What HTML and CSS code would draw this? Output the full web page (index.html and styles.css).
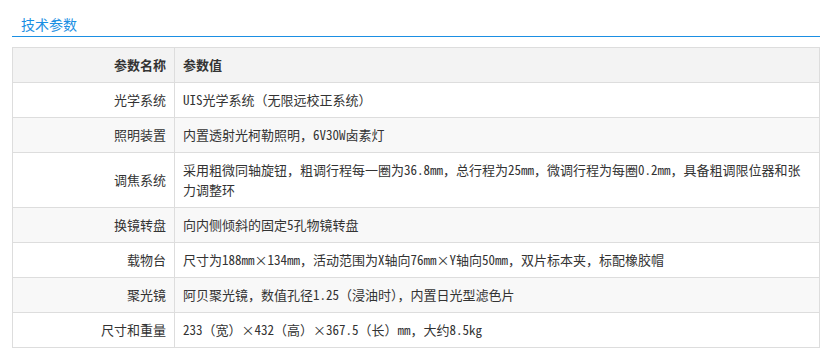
FILE: index.html
```html
<!DOCTYPE html>
<html lang="zh-CN">
<head>
<meta charset="utf-8">
<title>技术参数</title>
<link rel="stylesheet" href="styles.css">
</head>
<body>
<div class="panel">
  <div class="panel-head"><h2 class="panel-title">技术参数</h2></div>
  <table class="spec">
    <thead>
      <tr><th class="k">参数名称</th><th class="v">参数值</th></tr>
    </thead>
    <tbody>
      <tr><td class="k">光学系统</td><td class="v"><span class="en">UIS</span>光学系统（无限远校正系统）</td></tr>
      <tr><td class="k">照明装置</td><td class="v">内置透射光柯勒照明，<span class="en">6V30W</span>卤素灯</td></tr>
      <tr><td class="k">调焦系统</td><td class="v">采用粗微同轴旋钮，粗调行程每一圈为<span class="en">36.8mm</span>，总行程为<span class="en">25mm</span>，微调行程为每圈<span class="en">0.2mm</span>，具备粗调限位器和张力调整环</td></tr>
      <tr><td class="k">换镜转盘</td><td class="v">向内侧倾斜的固定<span class="en">5</span>孔物镜转盘</td></tr>
      <tr><td class="k">载物台</td><td class="v">尺寸为<span class="en">188mm</span>×<span class="en">134mm</span>，活动范围为<span class="en">X</span>轴向<span class="en">76mm</span>×<span class="en">Y</span>轴向<span class="en">50mm</span>，双片标本夹，标配橡胶帽</td></tr>
      <tr><td class="k">聚光镜</td><td class="v">阿贝聚光镜，数值孔径<span class="en">1.25</span>（浸油时），内置日光型滤色片</td></tr>
      <tr><td class="k">尺寸和重量</td><td class="v"><span class="en">233</span>（宽）×<span class="en">432</span>（高）×<span class="en">367.5</span>（长）<span class="en">mm</span>，大约<span class="en">8.5kg</span></td></tr>
    </tbody>
  </table>
</div>
</body>
</html>
```
FILE: styles.css
```css
html, body {
  margin: 0;
  padding: 0;
  background: #ffffff;
}
body {
  font-family: "Noto Sans CJK SC", "Noto Sans", sans-serif;
  color: #333333;
}
.panel {
  width: 808px;
  margin-left: 12px;
  padding-top: 12px;
}
.panel-head {
  border-bottom: 1px solid #1b8fe3;
  padding-left: 9px;
  height: 24px;
}
.panel-title {
  margin: 0;
  font-size: 14px;
  font-weight: normal;
  line-height: 24px;
  color: #1b8fe3;
}
.spec {
  margin-top: 10px;
  width: 100%;
  border-collapse: collapse;
  font-size: 13px;
  line-height: 20px;
}
.spec .en {
  font-feature-settings: "hwid";
}
.spec th, .spec td {
  border: 1px solid #dddddd;
  padding: 7px 8px;
  vertical-align: middle;
}
.spec th {
  background: #f3f3f3;
  font-weight: bold;
  color: #333333;
}
.spec .k {
  width: 145px;
  text-align: right;
}
.spec .v {
  text-align: left;
}
.spec tbody tr:nth-child(even) td {
  background: #f8f8f8;
}
```
